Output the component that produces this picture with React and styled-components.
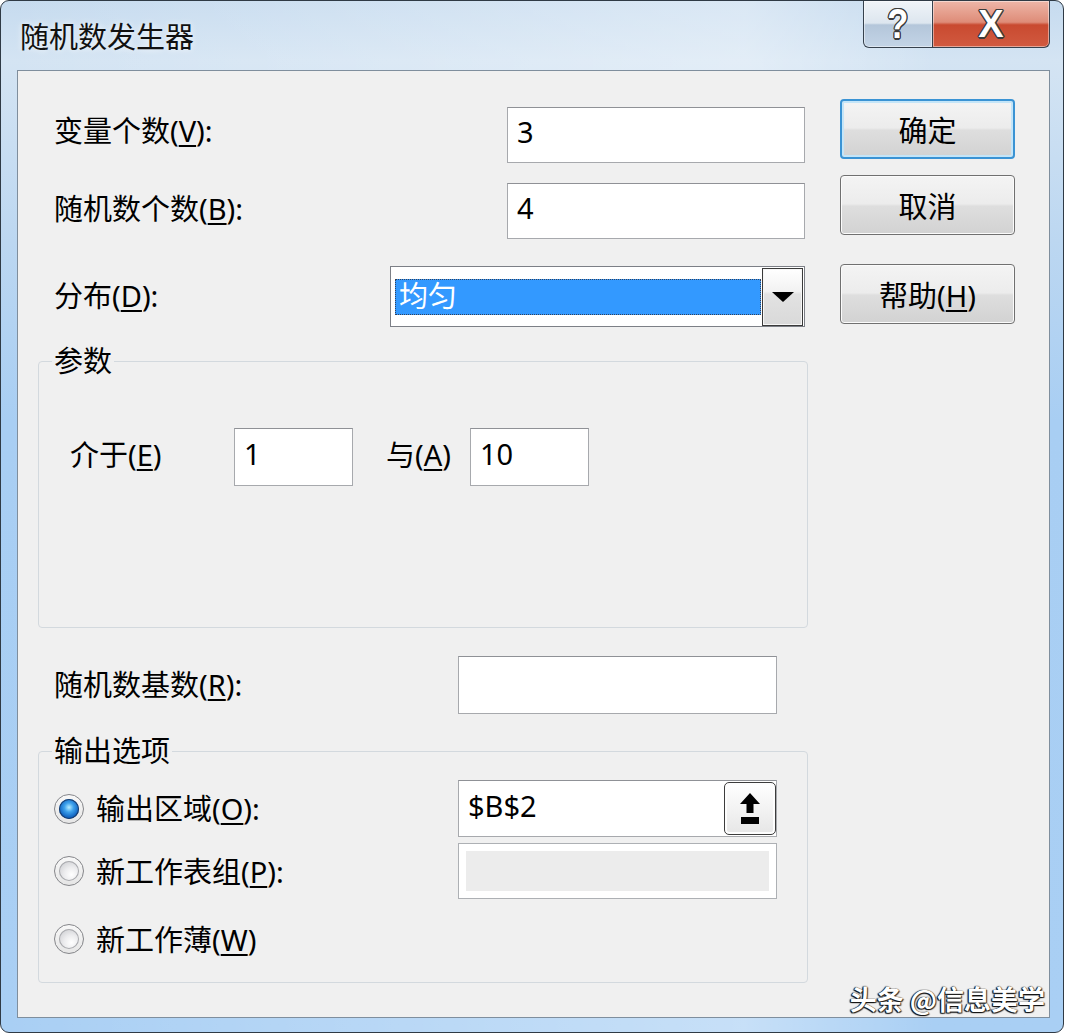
import React from 'react';
import styled, { createGlobalStyle } from 'styled-components';

const UI_FONT = `"Noto Sans", "Noto Sans CJK SC", sans-serif`;

const GlobalStyle = createGlobalStyle`
  * {
    margin: 0;
    padding: 0;
    box-sizing: border-box;
  }

  body {
    background: #ffffff;
    font-family: ${UI_FONT};
    color: #000;
  }
`;

/* window chrome */

const Window = styled.div`
  width: 1064px;
  height: 1033px;
  border: 1px solid #2f3a45;
  border-radius: 9px;
  overflow: hidden;
  display: flex;
  flex-direction: column;
  background:
    linear-gradient(90deg, rgba(255, 255, 255, 0) 0%, rgba(255, 255, 255, 0.35) 70%, rgba(255, 255, 255, 0) 88%),
    linear-gradient(180deg, #c6dbef 0px, #d4e4f3 60px, #bcd7f1 240px, #a8cef3 420px, #a9cff4 100%);
`;

const TitleBar = styled.div`
  height: 69px;
  flex: none;
  display: flex;
  justify-content: space-between;
  align-items: flex-start;
  padding-left: 19px;
`;

const TitleText = styled.div`
  font-size: 29px;
  line-height: 34px;
  margin-top: 19px;
  color: #111;
  text-shadow: 0 0 6px rgba(255, 255, 255, 0.9);
`;

const CaptionButtons = styled.div`
  display: flex;
  margin-right: 13px;
`;

const CaptionButton = styled.div`
  height: 47px;
  display: flex;
  align-items: center;
  justify-content: center;
  border: 1px solid #36414d;
  border-top: none;
  font-family: "Liberation Sans", Arial, sans-serif;
  font-weight: 700;
  line-height: 1;
  color: #fff;
  text-shadow:
    -1px -1px 0 #3b3b3b, 1px -1px 0 #3b3b3b, -1px 1px 0 #3b3b3b, 1px 1px 0 #3b3b3b,
    0 -1.5px 0 #3b3b3b, 0 1.5px 0 #3b3b3b, -1.5px 0 0 #3b3b3b, 1.5px 0 0 #3b3b3b;
  box-shadow: inset 0 0 0 1px rgba(255, 255, 255, 0.45);
`;

const HelpCaption = styled(CaptionButton)`
  width: 70px;
  border-radius: 0 0 0 6px;
  font-size: 42px;
  background: linear-gradient(180deg, #f0f4f8 0%, #dde6ef 48%, #b4c6da 52%, #c3d4e6 100%);

  span {
    display: inline-block;
    transform: scaleX(0.82);
  }
`;

const CloseCaption = styled(CaptionButton)`
  width: 117px;
  border-left: none;
  border-radius: 0 0 6px 0;
  font-size: 38px;
  background: linear-gradient(180deg, #eeb6a8 0%, #de8c78 46%, #c94a30 52%, #d15a40 100%);
`;

const Client = styled.div`
  position: relative;
  flex: 1;
  margin: 0 13px 14px 16px;
  border: 1px solid #7f8e9d;
  background: #f0f0f0;
  display: flex;
  align-items: flex-start;
  padding: 28px 0 0 20px;
`;

/* form parts */

const LeftColumn = styled.div`
  width: 770px;
  padding-top: 8px;
  display: flex;
  flex-direction: column;
`;

const FieldRow = styled.div`
  display: flex;
  align-items: center;
  justify-content: space-between;
  height: ${p => p.$h || 56}px;
  margin-top: ${p => p.$mt || 0}px;
  padding: 0 ${p => p.$pr ?? 3}px 0 16px;
`;

const Label = styled.span`
  font-size: 29px;
  line-height: 1;
  white-space: nowrap;
  flex: none;
  width: ${p => (p.$w ? `${p.$w}px` : 'auto')};
  margin-left: ${p => p.$ml || 0}px;
  padding-bottom: ${p => p.$raise || 0}px;
`;

const Key = styled.span`
  text-decoration: underline;
  text-decoration-thickness: 2px;
  text-underline-offset: 3px;
`;

const TextBox = styled.input`
  flex: none;
  width: ${p => p.$w}px;
  height: 100%;
  background: #fff;
  border: 1px solid #a7a9ad;
  border-top-color: #8f9196;
  padding: 0 9px 7px;
  font-family: ${UI_FONT};
  font-size: 29px;
  color: #000;
  outline: none;
`;

const Combo = styled.div`
  width: 415px;
  height: 61px;
  background: #fff;
  border: 1px solid #7c7f86;
  display: flex;
  align-items: center;
  padding: 0 1px 0 4px;
`;

const ComboSelection = styled.div`
  width: 366px;
  height: 36px;
  background: #3399ff;
  border: 1px dotted #34415a;
  color: #fff;
  font-size: 29px;
  line-height: 32px;
  padding-left: 3px;
`;

const ComboArrow = styled.div`
  margin-left: auto;
  width: 41px;
  height: 58px;
  border: 1px solid #3a3a3a;
  background: linear-gradient(180deg, #ffffff 0%, #f2f2f2 40%, #e2e2e2 45%, #d9d9d9 100%);
  box-shadow: inset 0 0 0 1px #f6f6f6;
  display: flex;
  align-items: center;
  justify-content: center;

  &::after {
    content: '';
    border-left: 11px solid transparent;
    border-right: 11px solid transparent;
    border-top: 10px solid #000;
  }
`;

const GroupBox = styled.fieldset`
  height: ${p => p.$h}px;
  margin-top: ${p => p.$mt}px;
  border: 1px solid #d3d9de;
  border-radius: 4px;
  padding: 0 13px;
  min-width: 0;
`;

const GroupTitle = styled.legend`
  font-size: 29px;
  line-height: 34px;
  padding: 0 2px;
`;

const RangeRow = styled.div`
  display: flex;
  align-items: center;
  height: 58px;
  margin-top: 50px;
  padding-left: 18px;
`;

const OptionRow = styled.div`
  display: flex;
  align-items: center;
  justify-content: space-between;
  height: ${p => p.$h || 56}px;
  margin-top: ${p => p.$mt || 0}px;
  padding: 0 17px 0 2px;
`;

const Option = styled.label`
  display: flex;
  align-items: center;
  gap: 12px;
`;

const Radio = styled.span`
  flex: none;
  width: 30px;
  height: 30px;
  border-radius: 50%;
  border: 1px solid #85868a;
  background: linear-gradient(180deg, #f8f8f8, #e6e6e6);
  display: flex;
  align-items: center;
  justify-content: center;

  &::after {
    content: '';
    width: 20px;
    height: 20px;
    border-radius: 50%;
    background: ${p =>
      p.$checked
        ? 'radial-gradient(circle at 50% 42%, #b6ecff 0%, #3ea2ec 30%, #0f62c0 65%, #0a3e86 100%)'
        : 'radial-gradient(circle at 62% 68%, #ffffff 0%, #ececee 40%, #c3c4c8 100%)'};
    box-shadow: inset 0 0 0 1px ${p => (p.$checked ? '#1a3d6c' : '#a9aaae')};
  }
`;

const RefEdit = styled.div`
  width: 319px;
  height: 57px;
  background: #fff;
  border: 1px solid #a7a9ad;
  border-top-color: #8f9196;
  display: flex;
  align-items: center;
  padding: 0 0 0 9px;
  font-size: 29px;
`;

const RefText = styled.span`
  padding-bottom: 7px;
`;

const RefButton = styled.div`
  margin-left: auto;
  width: 52px;
  height: 53px;
  border: 1px solid #3c3c3c;
  border-radius: 5px;
  background: linear-gradient(180deg, #ffffff 0%, #f3f3f3 50%, #e6e6e6 100%);
  box-shadow: inset 0 0 0 2px #fdfdfd;
  display: flex;
  align-items: center;
  justify-content: center;
`;

const DisabledBox = styled.div`
  width: 319px;
  height: 56px;
  border: 1px solid #adb0b4;
  background: #ececec;
  box-shadow: inset 0 0 0 7px #ffffff;
`;

/* right column buttons */

const RightColumn = styled.div`
  margin-left: 32px;
  width: 175px;
  display: flex;
  flex-direction: column;
`;

const DialogButton = styled.button`
  width: 175px;
  height: 60px;
  margin-top: ${p => p.$mt || 0}px;
  border-radius: 4px;
  border: ${p => (p.$default ? '2px solid #3a93d4' : '1px solid #707070')};
  background: linear-gradient(180deg, #f4f4f4 0%, #ececec 48%, #dedede 52%, #d2d2d2 100%);
  box-shadow: inset 0 0 0 ${p => (p.$default ? '2px #c4e5f8' : '1px #fbfbfb')};
  font-family: ${UI_FONT};
  font-size: 29px;
  color: #000;
  cursor: pointer;
`;

const Watermark = styled.div`
  position: absolute;
  right: 4px;
  bottom: 2px;
  font-family: "Noto Sans CJK SC", sans-serif;
  font-weight: 700;
  font-size: 27px;
  line-height: 32px;
  color: #fff;
  text-shadow: -1px 1px 1px #111, 1px 1px 1px #333, -1px 0 1px #222, 0 0 1px #000;
`;

const UploadIcon = () => (
  <svg width="20" height="32" viewBox="0 0 20 32">
    <path d="M10 0 L20 11 H13.5 V20 H6.5 V11 H0 Z" fill="#000" />
    <rect x="1" y="24" width="18" height="7" fill="#000" />
  </svg>
);

const App = () => (
  <>
    <GlobalStyle />
    <Window>
      <TitleBar>
        <TitleText>随机数发生器</TitleText>
        <CaptionButtons>
          <HelpCaption><span>?</span></HelpCaption>
          <CloseCaption>X</CloseCaption>
        </CaptionButtons>
      </TitleBar>

      <Client>
        <LeftColumn>
          <FieldRow>
            <Label $raise={9}>变量个数(<Key>V</Key>):</Label>
            <TextBox $w={298} defaultValue="3" readOnly />
          </FieldRow>
          <FieldRow $mt={20}>
            <Label $raise={6}>随机数个数(<Key>B</Key>):</Label>
            <TextBox $w={298} defaultValue="4" readOnly />
          </FieldRow>
          <FieldRow $mt={27} $h={61}>
            <Label $raise={3}>分布(<Key>D</Key>):</Label>
            <Combo>
              <ComboSelection>均匀</ComboSelection>
              <ComboArrow />
            </Combo>
          </FieldRow>

          <GroupBox $mt={17} $h={284}>
            <GroupTitle>参数</GroupTitle>
            <RangeRow>
              <Label $w={164} $raise={6}>介于(<Key>E</Key>)</Label>
              <TextBox $w={119} defaultValue="1" readOnly />
              <Label $w={84} $ml={33} $raise={6}>与(<Key>A</Key>)</Label>
              <TextBox $w={119} defaultValue="10" readOnly />
            </RangeRow>
          </GroupBox>

          <FieldRow $mt={28} $h={58} $pr={31}>
            <Label $raise={2}>随机数基数(<Key>R</Key>):</Label>
            <TextBox $w={319} defaultValue="" readOnly />
          </FieldRow>

          <GroupBox $mt={20} $h={249}>
            <GroupTitle>输出选项</GroupTitle>
            <OptionRow $mt={12} $h={57}>
              <Option>
                <Radio $checked />
                <Label>输出区域(<Key>O</Key>):</Label>
              </Option>
              <RefEdit>
                <RefText>$B$2</RefText>
                <RefButton>
                  <UploadIcon />
                </RefButton>
              </RefEdit>
            </OptionRow>
            <OptionRow $mt={6}>
              <Option>
                <Radio />
                <Label>新工作表组(<Key>P</Key>):</Label>
              </Option>
              <DisabledBox />
            </OptionRow>
            <OptionRow $mt={12}>
              <Option>
                <Radio />
                <Label>新工作薄(<Key>W</Key>)</Label>
              </Option>
            </OptionRow>
          </GroupBox>
        </LeftColumn>

        <RightColumn>
          <DialogButton $default>确定</DialogButton>
          <DialogButton $mt={16}>取消</DialogButton>
          <DialogButton $mt={29}>帮助(<Key>H</Key>)</DialogButton>
        </RightColumn>

        <Watermark>头条 @信息美学</Watermark>
      </Client>
    </Window>
  </>
);

export default App;
